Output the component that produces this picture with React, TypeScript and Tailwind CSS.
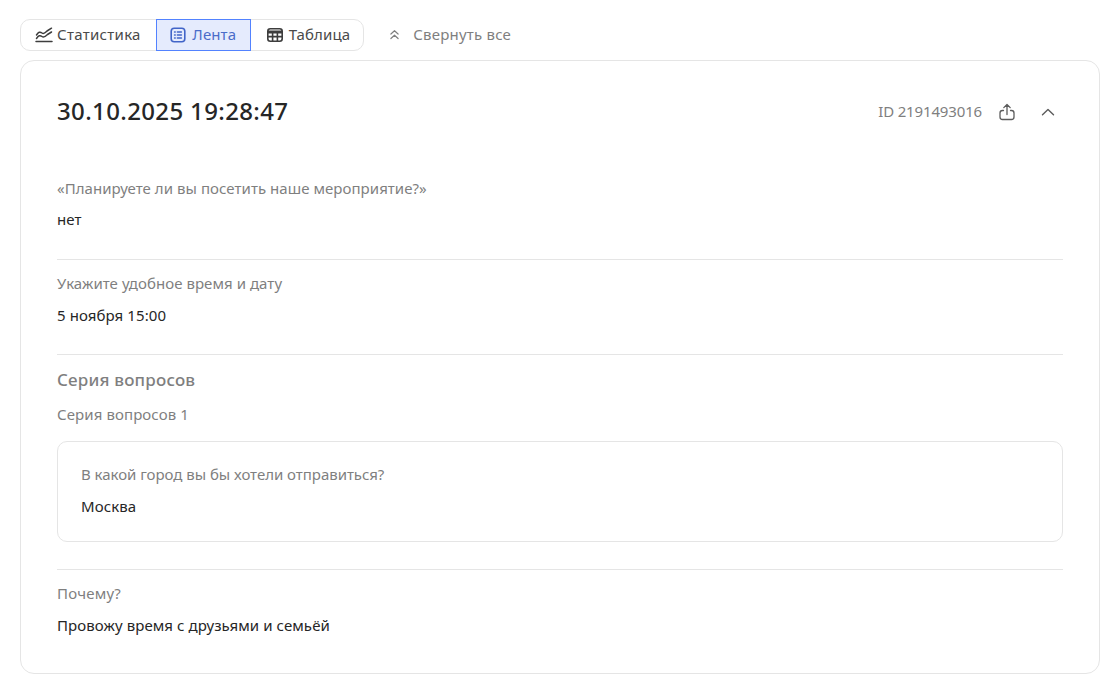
const font = "font-['Noto_Sans','Open_Sans',sans-serif]";

function Field({ label, value, cls = "", gap = "mt-3", track = "tracking-[0.05px]" }: { label: string; value: string; cls?: string; gap?: string; track?: string }) {
  return (
    <div className={cls}>
      <div className={`text-[15px] leading-5 text-[#7f7f7f] ${track}`}>{label}</div>
      <div className={`${gap} text-[15px] leading-5 text-[#262626] tracking-[0.08px]`}>{value}</div>
    </div>
  );
}

export default function App() {
  return (
    <div className={`${font} w-[1107px] h-[680px] overflow-hidden bg-white pl-5 pr-[7px] pt-[19px]`}>
      <div className="flex items-center h-8">
        <div className="flex h-8 rounded-[10px] border border-[#e5e5e5] text-[15px] text-[#4a4a4a] tracking-[0.1px]">
          <button className="flex items-center gap-[4px] pl-[14px] pr-[15px] h-full pb-px">
            <svg width="18" height="16" viewBox="0 0 18 16" fill="none" stroke="#3d3d3d" strokeWidth="1.5" strokeLinecap="round" strokeLinejoin="round">
              <path d="M1.5 8 C3.5 5 5 4.5 7 6 C9 7.5 10.5 5.5 12 4 L16.5 1.2" />
              <path d="M1.5 11.5 C3.5 8.5 5 8 7 9.5 C9 11 11 9 12.5 7.5 L16.5 5" />
              <path d="M1 14.6 H17" />
            </svg>
            <span className="tracking-[0.3px]">Статистика</span>
          </button>
          <button className="flex items-center gap-[6px] w-[95px] justify-center -my-px h-8 pb-px border border-[#5282ff] bg-[#e5ebfd] text-[#4a6cc9]">
            <svg width="16" height="16" viewBox="0 0 16 16" fill="none" stroke="#4164c8" strokeWidth="1.6" strokeLinecap="round">
              <rect x="1.2" y="1.2" width="13.6" height="13.6" rx="3" />
              <path d="M4.6 5H5.2M7.4 5H11.4M4.6 8H5.2M7.4 8H11.4M4.6 11H5.2M7.4 11H11.4" />
            </svg>
            Лента
          </button>
          <button className="flex items-center gap-[6px] pl-4 pr-[13px] h-full pb-px">
            <svg width="16" height="14" viewBox="0 0 16 14" fill="none" stroke="#3d3d3d" strokeWidth="1.6">
              <rect x="0.8" y="0.8" width="14.4" height="12.4" rx="2.5" />
              <path d="M1 4H15" strokeWidth="3" />
              <path d="M1 8.6H15M5.6 4V13M10.4 4V13" />
            </svg>
            Таблица
          </button>
        </div>
        <button className="ml-[26px] flex items-center gap-[14px] pb-px text-[15px] text-[#7f7f7f] tracking-[0.22px]">
          <svg width="9" height="11" viewBox="0 0 10 12" fill="none" stroke="#7f7f7f" strokeWidth="1.3" strokeLinecap="round" strokeLinejoin="round">
            <path d="M1 5.5 L5 1.8 L9 5.5" />
            <path d="M1 10.5 L5 6.8 L9 10.5" />
          </svg>
          Свернуть все
        </button>
      </div>

      <div className="mt-[9px] w-[1080px] h-[614px] rounded-[14px] border border-[#e5e5e5] pl-9 pr-9">
        <div className="flex items-center justify-between h-[24px] mt-[38px]">
          <div className="text-[24px] leading-7 font-medium text-[#262626] tracking-[0.36px]">30.10.2025 19:28:47</div>
          <div className="flex items-center text-[15px] text-[#7f7f7f] tracking-[-0.15px]">
            <span>ID 2191493016</span>
            <svg className="ml-4 mt-[2px]" width="18" height="18" viewBox="0 0 18 18" fill="none" stroke="#5c5c5c" strokeWidth="1.3" strokeLinecap="round" strokeLinejoin="round">
              <path d="M5.5 7.5H4.5A2.5 2.5 0 0 0 2 10V14A2.5 2.5 0 0 0 4.5 16.5H13.5A2.5 2.5 0 0 0 16 14V10A2.5 2.5 0 0 0 13.5 7.5H12.5" />
              <path d="M9 11.5V1.5M5.8 4.6 L9 1.5 L12.2 4.6" />
            </svg>
            <svg className="ml-[25px] mr-[8px] mt-[2px]" width="14" height="8" viewBox="0 0 14 8" fill="none" stroke="#5c5c5c" strokeWidth="1.4" strokeLinecap="round" strokeLinejoin="round">
              <path d="M1.5 6.8 L7 1.5 L12.5 6.8" />
            </svg>
          </div>
        </div>

        <Field cls="mt-[55px]" gap="mt-[11px]" label="«Планируете ли вы посетить наше мероприятие?»" value="нет" />
        <div className="mt-[30px] border-t border-[#e5e5e5]" />
        <Field cls="mt-[13px]" label="Укажите удобное время и дату" value="5 ноября 15:00" />
        <div className="mt-[29px] border-t border-[#e5e5e5]" />
        <div className="mt-[13px] text-[17px] leading-6 font-medium text-[#7f7f7f] tracking-[0.19px]">Серия вопросов</div>
        <div className="mt-[12px] text-[15px] leading-5 text-[#7f7f7f] tracking-[0.09px]">Серия вопросов 1</div>
        <div className="mt-[17px] h-[101px] rounded-[10px] border border-[#e5e5e5] pl-[23px] pt-[22px]">
          <Field track="tracking-[-0.03px]" label="В какой город вы бы хотели отправиться?" value="Москва" />
        </div>
        <div className="mt-[27px] border-t border-[#e5e5e5]" />
        <Field cls="mt-[13px]" track="tracking-[0.2px]" label="Почему?" value="Провожу время с друзьями и семьёй" />
      </div>
    </div>
  );
}
